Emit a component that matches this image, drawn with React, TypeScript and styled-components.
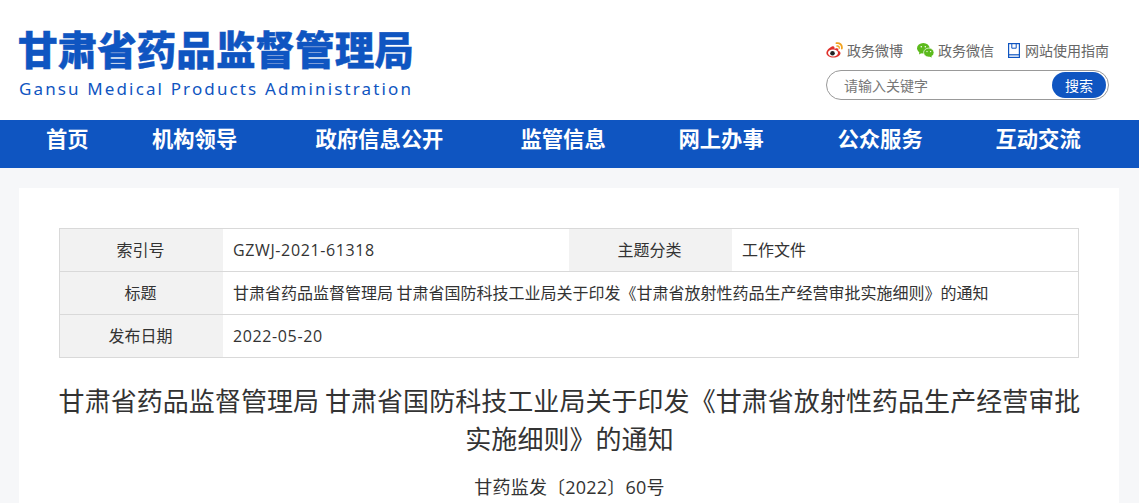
import React from "react";
import styled, { createGlobalStyle } from "styled-components";

const Global = createGlobalStyle`
  html, body { margin: 0; padding: 0; background: #f6f7f9; }
  body { font-family: "Open Sans", "Noto Sans CJK SC", sans-serif; color: #333; overflow: hidden; height: 503px; }
`;
const Header = styled.header`
  height: 120px; background: #fff; display: flex; justify-content: space-between;
  padding: 0 30px 0 19px; box-sizing: border-box;
`;
const Logo = styled.div`display: flex; flex-direction: column; padding-top: 24px; margin-left: -1px;`;
const LogoCn = styled.div`
  font: 900 39.6px/48px "Noto Sans CJK SC", sans-serif; color: #0f55c1; white-space: nowrap;
  -webkit-text-stroke: 0.4px #0f55c1;
`;
const LogoEn = styled.div`
  font: 400 17px/22px "Noto Sans", "Open Sans", sans-serif; color: #0f55c1; letter-spacing: 2.13px; white-space: nowrap; margin: 6px 0 0 1px;
`;
const Tools = styled.div`display: flex; flex-direction: column; align-items: flex-end; padding-top: 41px;`;
const Links = styled.div`display: flex; gap: 14px; height: 18px; align-items: center; width: 283px;`;
const LinkItem = styled.span`
  display: flex; align-items: center; gap: 4px; font: 400 14px/18px "Noto Sans CJK SC", sans-serif; color: #666; white-space: nowrap;
`;
const Search = styled.div`
  margin-top: 11px; width: 283px; height: 30px; box-sizing: border-box; border: 1px solid #999; border-radius: 15px;
  display: flex; align-items: center; justify-content: space-between; padding: 0 2px 0 17px;
  font: 400 14px/18px "Noto Sans CJK SC", sans-serif; color: #777;
`;
const SearchBtn = styled.span`
  width: 54px; height: 26px; border-radius: 13px; background: #0f55c1; color: #fff; text-align: center;
  font: 400 14px/26px "Noto Sans CJK SC", sans-serif;
`;
const Nav = styled.nav`
  height: 48px; background: #0f55c1; display: grid; align-items: center; padding: 0 0 12px 46px; box-sizing: border-box;
  grid-template-columns: 106px 163.5px 205px 158px 159px 158px auto;
`;
const NavItem = styled.a`
  font: 700 21.3px/34px "Noto Sans CJK SC", sans-serif; color: #fff; white-space: nowrap;
`;
const Card = styled.main`
  margin: 20px 20px 0 19px; background: #fff; padding: 40px 40px 0; height: 315px; box-sizing: border-box; overflow: hidden;
`;
const Table = styled.div`
  border: 1px solid #d9d9d9; border-bottom: 0; display: grid; grid-template-columns: 163px 346px 163px 1fr;
  font: 400 16px/40px "Noto Sans CJK SC", sans-serif; color: #333;
`;
const Label = styled.div`
  background: #f2f2f2; text-align: center; border-bottom: 1px solid #d9d9d9; height: 42px; padding-right: 2px; box-sizing: content-box; width: 161px;
`;
const Value = styled.div<{ $span?: boolean; $latin?: boolean }>`
  padding-left: 10px; border-bottom: 1px solid #d9d9d9; height: 42px; white-space: nowrap;
  ${(p) => (p.$span ? "grid-column: 2 / 5;" : "")}
  ${(p) => (p.$latin ? 'font-family: "Open Sans", sans-serif; letter-spacing: .62px; line-height: 42px;' : "")}
`;
const Title = styled.h1`
  margin: 23px -10px 0; padding-left: 1px; font: 400 26px/38px "Noto Sans CJK SC", sans-serif; color: #333; text-align: center; letter-spacing: .05px;
`;
const DocNo = styled.p`
  margin: 16px 0 0; padding-left: 1px; font: 400 18px/28px "Open Sans", "Noto Sans CJK SC", sans-serif; color: #333; text-align: center; letter-spacing: .2px;
`;

const Weibo = () => (
  <svg width="17" height="16" viewBox="0 0 17 16">
    <path d="M6.500 4.300C3.500 5.400.4 8.300.4 11c0 2.600 3.200 4.600 7 4.600 4 0 7.100-2.200 7.100-4.400 0-1.500-1.300-2.200-2.300-2.500.5-1.300.1-2.400-1.400-2.400-.9 0-1.800.4-2.200.6.300-1.500-.6-3.300-2.100-2.600z" fill="#e0312c" />
    <ellipse cx="7" cy="11" rx="5" ry="3.400" fill="#fff" />
    <circle cx="6.500" cy="11.200" r="2.300" fill="#222" />
    <path d="M10.500 1.200c3-.6 6 1.700 5.300 5.300" fill="none" stroke="#f2a31f" strokeWidth="1.800" strokeLinecap="round" />
    <path d="M11 4c1.500-.3 2.500.8 2.200 2.200" fill="none" stroke="#f2a31f" strokeWidth="1.400" strokeLinecap="round" />
  </svg>
);
const Wechat = () => (
  <svg width="17" height="15" viewBox="0 0 17 15">
    <ellipse cx="6.300" cy="5.300" rx="6.300" ry="5.300" fill="#5cba1c" />
    <path d="M2.500 8.500l-.5 3 3.500-2z" fill="#5cba1c" />
    <ellipse cx="11.800" cy="9.600" rx="5.200" ry="4.500" fill="#5cba1c" stroke="#fff" strokeWidth=".7" />
    <path d="M14 12.500l1 2-3-1z" fill="#5cba1c" />
    <circle cx="4.300" cy="3.800" r=".8" fill="#fff" />
    <circle cx="8.300" cy="3.800" r=".8" fill="#fff" />
    <circle cx="10" cy="8.600" r=".7" fill="#fff" />
    <circle cx="13.600" cy="8.600" r=".7" fill="#fff" />
  </svg>
);
const BookBox = styled.span`display: flex; margin-right: 1px;`;
const Book = () => (
  <BookBox>
    <svg width="12" height="15" viewBox="0 0 12 15" fill="none" stroke="#0f55c1" strokeWidth="1.200">
      <rect x=".6" y=".6" width="10.800" height="13.800" />
      <path d="M.6 11.800h10.800" />
      <path d="M3.800 .6v4.600h4.400V.6" strokeWidth="1" />
    </svg>
  </BookBox>
);

const navItems = ["首页", "机构领导", "政府信息公开", "监管信息", "网上办事", "公众服务", "互动交流"];

export default function App() {
  return (
    <>
      <Global />
      <Header>
        <Logo>
          <LogoCn>甘肃省药品监督管理局</LogoCn>
          <LogoEn>Gansu Medical Products Administration</LogoEn>
        </Logo>
        <Tools>
          <Links>
            <LinkItem><Weibo />政务微博</LinkItem>
            <LinkItem><Wechat />政务微信</LinkItem>
            <LinkItem><Book />网站使用指南</LinkItem>
          </Links>
          <Search>
            <span>请输入关键字</span>
            <SearchBtn>搜索</SearchBtn>
          </Search>
        </Tools>
      </Header>
      <Nav>
        {navItems.map((n) => <NavItem key={n}>{n}</NavItem>)}
      </Nav>
      <Card>
        <Table>
          <Label>索引号</Label>
          <Value $latin>GZWJ-2021-61318</Value>
          <Label>主题分类</Label>
          <Value>工作文件</Value>
          <Label>标题</Label>
          <Value $span>甘肃省药品监督管理局 甘肃省国防科技工业局关于印发《甘肃省放射性药品生产经营审批实施细则》的通知</Value>
          <Label>发布日期</Label>
          <Value $span $latin>2022-05-20</Value>
        </Table>
        <Title>甘肃省药品监督管理局 甘肃省国防科技工业局关于印发《甘肃省放射性药品生产经营审批实施细则》的通知</Title>
        <DocNo>甘药监发〔2022〕60号</DocNo>
      </Card>
    </>
  );
}
